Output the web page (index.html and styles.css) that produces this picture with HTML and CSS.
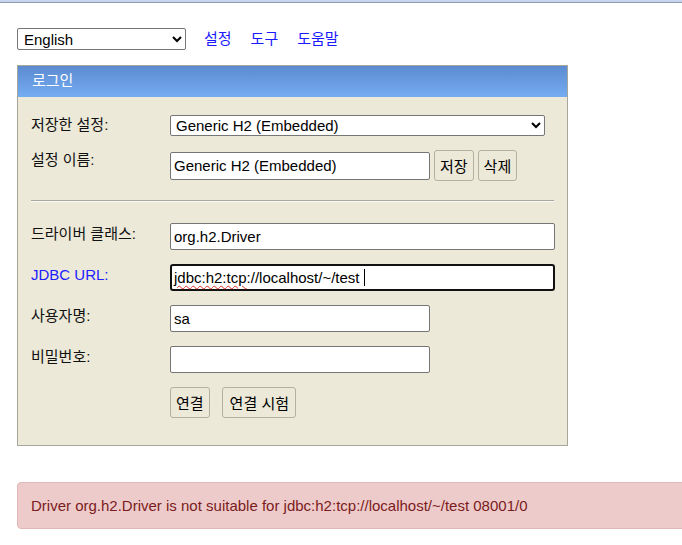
FILE: index.html
```html
<!DOCTYPE html>
<html lang="ko">
<head>
<meta charset="utf-8">
<title>H2 Console</title>
<link rel="stylesheet" href="styles.css">
</head>
<body>
<div class="topbar"></div>
<div class="page">
  <div class="toolbar">
    <select class="lang">
      <option>English</option>
    </select>
    <a class="link" href="#">설정</a>
    <a class="link" href="#">도구</a>
    <a class="link" href="#">도움말</a>
  </div>

  <div class="panel">
    <div class="panel-head">로그인</div>
    <div class="panel-body">
      <div class="row row-saved">
        <span class="label">저장한 설정:</span>
        <select class="saved">
          <option>Generic H2 (Embedded)</option>
        </select>
      </div>
      <div class="row row-name">
        <span class="label">설정 이름:</span>
        <div class="inline">
          <input class="field short" type="text" value="Generic H2 (Embedded)">
          <button class="btn">저장</button>
          <button class="btn">삭제</button>
        </div>
      </div>
      <hr class="sep">
      <div class="row">
        <span class="label">드라이버 클래스:</span>
        <input class="field long" type="text" value="org.h2.Driver">
      </div>
      <div class="row">
        <span class="label blue">JDBC URL:</span>
        <div class="field long focused"><span class="misspelled">jdbc:h2:tcp</span>://localhost/~/test <span class="caret"></span></div>
      </div>
      <div class="row">
        <span class="label">사용자명:</span>
        <input class="field short" type="text" value="sa">
      </div>
      <div class="row">
        <span class="label">비밀번호:</span>
        <input class="field short" type="password" value="">
      </div>
      <div class="row row-actions">
        <span class="label"></span>
        <div class="inline gap12">
          <button class="btn">연결</button>
          <button class="btn wide">연결 시험</button>
        </div>
      </div>
    </div>
  </div>

  <div class="alert-wrap">
    <div class="alert">Driver org.h2.Driver is not suitable for jdbc:h2:tcp://localhost/~/test 08001/0</div>
  </div>
</div>
</body>
</html>
```

FILE: styles.css
```css
html, body {
  margin: 0;
  padding: 0;
  overflow: hidden;
  background: #ffffff;
}
body {
  font-family: "Liberation Sans", Arial, "Noto Sans CJK KR", sans-serif;
  font-size: 15px;
  color: #000;
}
.topbar {
  height: 2px;
  background: #c8d7ee;
  border-bottom: 1px solid #8c9cb0;
}
.page {
  padding: 25px 0 0 17px;
  width: 665px;
}
.toolbar {
  display: flex;
  align-items: center;
  height: 22px;
}
.lang {
  width: 169px;
  height: 22px;
  font-family: inherit;
  font-size: 15px;
  border: 1px solid #767676;
  border-radius: 2px;
  background: #fff;
  padding: 0 2px;
  margin-right: 18px;
}
.link {
  color: #1a1aff;
  text-decoration: none;
  margin-right: 19px;
  font-size: 15px;
  line-height: 20px;
}
.panel {
  margin-top: 15px;
  width: 549px;
  border: 1px solid #a7a69a;
  background: #ece9d8;
}
.panel-head {
  height: 31px;
  line-height: 30px;
  padding-left: 14px;
  color: #fff;
  font-size: 15px;
  background: linear-gradient(#5c8bd0, #74acf2);
}
.panel-body {
  padding: 18px 13px 27px 13px;
}
.row {
  display: grid;
  grid-template-columns: 139px auto;
  align-items: start;
  margin-bottom: 14px;
}
.label {
  line-height: 20px;
  color: #111;
}
.row .label { padding-top: 1px; }
.blue { color: #2020ff; }
.saved {
  width: 375px;
  height: 21px;
  font-family: inherit;
  font-size: 15px;
  border: 1px solid #767676;
  border-radius: 2px;
  background: #fff;
  padding: 0 1px;
}
.row-saved { margin-bottom: 14px; }
.row-saved .label { padding-top: 0; }
.row-name .label { padding-top: 0; }
.inline {
  display: flex;
  align-items: center;
  gap: 4px;
}
.gap12 { gap: 12px; }
.field {
  box-sizing: border-box;
  height: 27px;
  border: 1px solid #767676;
  border-radius: 2px;
  background: #fff;
  font-family: inherit;
  font-size: 15px;
  padding: 0 3px;
  color: #000;
  margin: 0;
}
.short { width: 260px; }
.long { width: 385px; }
.row-name .field { height: 28px; }
.focused {
  border: 2px solid #111;
  border-radius: 3px;
  padding: 0 2px;
  line-height: 23px;
  display: flex;
  align-items: center;
  white-space: pre;
}
.misspelled {
  text-decoration: underline wavy #e0302a;
  text-decoration-thickness: 1px;
  text-underline-offset: 2px;
}
.caret {
  display: inline-block;
  width: 1px;
  height: 17px;
  background: #000;
}
.btn {
  height: 31px;
  padding: 0 5px;
  border: 1px solid #b4b0a2;
  border-radius: 3px;
  background: #ece9d8;
  font-family: "Liberation Sans", Arial, "Noto Sans CJK KR", sans-serif;
  font-size: 15px;
  color: #000;
}
.btn.wide { padding: 0 6px 0 7px; }
.sep {
  border: 0;
  border-top: 1px solid #a9a8a0;
  border-bottom: 1px solid #fafaf4;
  margin: 19px 0 21px 0;
}
.row-actions { margin-bottom: 0; }
.alert-wrap {
  margin-top: 36px;
  overflow: hidden;
}
.alert {
  width: 700px;
  box-sizing: border-box;
  height: 47px;
  padding-left: 13px;
  line-height: 45px;
  background: #eecbcb;
  border: 1px solid #e2b7b7;
  border-radius: 4px;
  color: #7a1c1c;
  font-size: 15px;
}
```
